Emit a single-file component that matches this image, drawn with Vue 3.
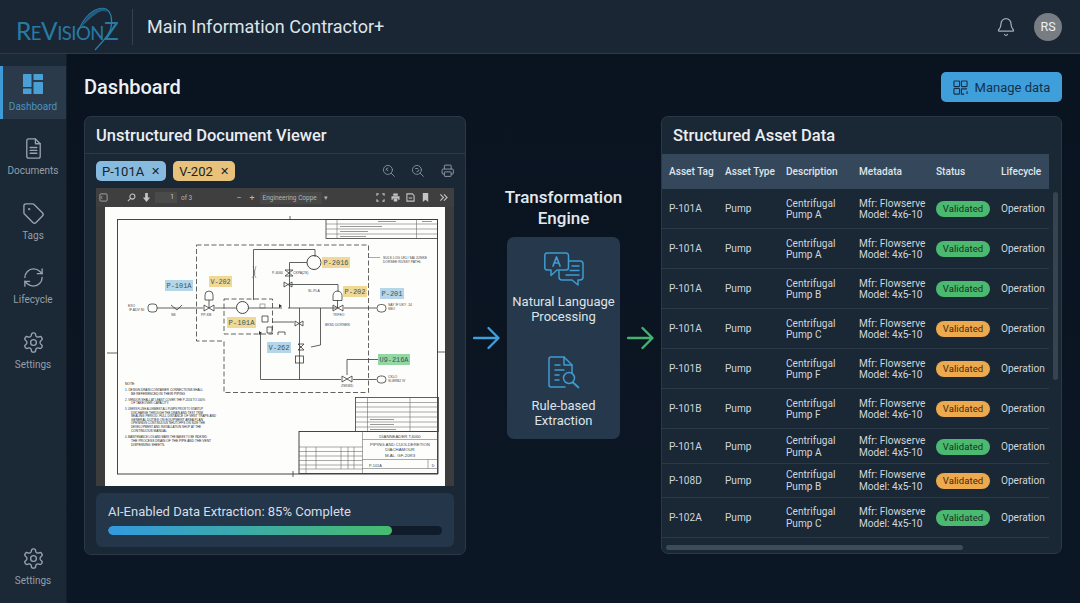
<script setup>
const gear = [
  'M12.22 2h-.44a2 2 0 0 0-2 2v.18a2 2 0 0 1-1 1.73l-.43.25a2 2 0 0 1-2 0l-.15-.08a2 2 0 0 0-2.73.73l-.22.38a2 2 0 0 0 .73 2.73l.15.1a2 2 0 0 1 1 1.72v.51a2 2 0 0 1-1 1.74l-.15.09a2 2 0 0 0-.73 2.73l.22.38a2 2 0 0 0 2.73.73l.15-.08a2 2 0 0 1 2 0l.43.25a2 2 0 0 1 1 1.73V20a2 2 0 0 0 2 2h.44a2 2 0 0 0 2-2v-.18a2 2 0 0 1 1-1.73l.43-.25a2 2 0 0 1 2 0l.15.08a2 2 0 0 0 2.73-.73l.22-.39a2 2 0 0 0-.73-2.73l-.15-.08a2 2 0 0 1-1-1.74v-.5a2 2 0 0 1 1-1.74l.15-.09a2 2 0 0 0 .73-2.73l-.22-.38a2 2 0 0 0-2.73-.73l-.15.08a2 2 0 0 1-2 0l-.43-.25a2 2 0 0 1-1-1.73V4a2 2 0 0 0-2-2z',
  'M12 9a3 3 0 1 0 0 6 3 3 0 0 0 0-6z'
]

const navItems = [
  {
    label: 'Documents',
    paths: [
      'M14 2H7a2 2 0 0 0-2 2v16a2 2 0 0 0 2 2h10a2 2 0 0 0 2-2V7z',
      'M14 2v5h5',
      'M8.5 11h7M8.5 14h7M8.5 17h7'
    ]
  },
  {
    label: 'Tags',
    paths: [
      'M12.586 2.586A2 2 0 0 0 11.172 2H4a2 2 0 0 0-2 2v7.172a2 2 0 0 0 .586 1.414l8.704 8.704a2.426 2.426 0 0 0 3.42 0l6.58-6.58a2.426 2.426 0 0 0 0-3.42z',
      'M7.5 7a.5.5 0 1 0 0 1 .5.5 0 0 0 0-1z'
    ]
  },
  {
    label: 'Lifecycle',
    paths: [
      'M3 12a9 9 0 0 1 9-9 9.75 9.75 0 0 1 6.74 2.74L21 8',
      'M21 3v5h-5',
      'M21 12a9 9 0 0 1-9 9 9.75 9.75 0 0 1-6.74-2.74L3 16',
      'M8 16H3v5'
    ]
  },
  { label: 'Settings', paths: gear }
]

const columns = ['Asset Tag', 'Asset Type', 'Description', 'Metadata', 'Status', 'Lifecycle']

const rows = [
  { tag: 'P-101A', desc: 'Pump A', model: '4x6-10', state: 'ok', height: 40 },
  { tag: 'P-101A', desc: 'Pump A', model: '4x6-10', state: 'ok', height: 40 },
  { tag: 'P-101A', desc: 'Pump B', model: '4x5-10', state: 'ok', height: 40 },
  { tag: 'P-101A', desc: 'Pump C', model: '4x5-10', state: 'warn', height: 40 },
  { tag: 'P-101B', desc: 'Pump F', model: '4x6-10', state: 'warn', height: 40 },
  { tag: 'P-101B', desc: 'Pump F', model: '4x6-10', state: 'warn', height: 40 },
  { tag: 'P-101A', desc: 'Pump A', model: '4x5-10', state: 'ok', height: 34.5 },
  { tag: 'P-108D', desc: 'Pump B', model: '4x5-10', state: 'warn', height: 34 },
  { tag: 'P-102A', desc: 'Pump C', model: '4x5-10', state: 'ok', height: 40 }
]

// labels on the scanned drawing, in page pixels
const drawingTags = [
  { text: 'P-101A', x: 165, y: 280, w: 28, tone: 'blue' },
  { text: 'V-202', x: 209, y: 276, w: 23, tone: 'yellow' },
  { text: 'P-2016', x: 322, y: 257, w: 28, tone: 'yellow' },
  { text: 'P-202', x: 343, y: 286, w: 24, tone: 'yellow' },
  { text: 'P-201', x: 380, y: 288, w: 24, tone: 'blue' },
  { text: 'P-101A', x: 227, y: 317, w: 29, tone: 'yellow' },
  { text: 'V-262', x: 267, y: 342, w: 24, tone: 'blue' },
  { text: 'U9-216A', x: 378, y: 354, w: 32, tone: 'green' }
]

const notes = [
  { t: 'NOTE:', x: 125, y: 385, w: 10 },
  { t: '1.  DESIGN DRAIN CONTAINER CONNECTIONS SHALL', x: 125, y: 391, w: 78 },
  { t: 'BE REFERENCED IN THEIR PIPING', x: 131, y: 394.5, w: 54 },
  { t: '2.  VENDOR SHALL AT LEAST COVER THE P-2016 TO 100%', x: 125, y: 400.5, w: 80 },
  { t: 'OF TAKEOVER CAPACITY.', x: 131, y: 404, w: 38 },
  { t: '3.  USERS FLUSH ALIGNMENT ALL PUMPS PRIOR TO STARTUP', x: 125, y: 410, w: 78 },
  { t: 'DISCHARGE THROUGH THE DRAIN AND TEST TRIM', x: 131, y: 413.5, w: 72 },
  { t: 'SEALING PERIOD. FULL DISTANCE OF VENT TRAPS AND', x: 131, y: 417, w: 85 },
  { t: 'GENERAL DUTIES ON EQUIPMENT AREA PLAN', x: 131, y: 420.5, w: 72 },
  { t: 'OPENINGS CONTINUOUS SHUTOFFS ON SIZE THE', x: 131, y: 424, w: 74 },
  { t: 'DEVELOPMENT AND INSTALLATION SHOP AT THE', x: 131, y: 428, w: 70 },
  { t: 'CONTINUOUS MANUAL', x: 131, y: 432, w: 36 },
  { t: '4.  MAINTENANCE LOG AND MARK THE BASES TO BE INDEXED', x: 125, y: 438, w: 82 },
  { t: 'THE PROCESS DRAIN OF THE PIPE AND THE VENT', x: 131, y: 441.5, w: 80 },
  { t: 'DISPENSING SHEETS.', x: 131, y: 445.5, w: 34 }
]
</script>

<template>
  <div class="app">
    <header class="topbar">
      <div class="logo">
        <span class="logo-text">R<small>E</small>V<small>ISION</small>Z</span>
        <svg class="logo-swoosh" viewBox="0 0 40 48" fill="none">
          <path d="M1 30C6 17 13 8 22 5c6-2 11 0 13 7 2 9-1 18-8 25l-8 9" stroke="#2b7fab" stroke-width="1.200" />
          <path d="M4 25C9 15 16 7 24 5c3-1 5 0 8 3-5-2-8-1-12 2-6 4-11 9-16 15z" fill="#1f5f85" />
        </svg>
      </div>
      <div class="topbar-divider"></div>
      <h1 class="app-title">Main Information Contractor+</h1>
      <svg class="bell" viewBox="0 0 24 24" fill="none" stroke="#a4adb7" stroke-width="1.5" stroke-linecap="round" stroke-linejoin="round">
        <path d="M10.268 21a2 2 0 0 0 3.464 0" />
        <path d="M3.262 15.326A1 1 0 0 0 4 17h16a1 1 0 0 0 .74-1.673C19.41 13.956 18 12.499 18 8A6 6 0 0 0 6 8c0 4.499-1.411 5.956-2.738 7.326" />
      </svg>
      <div class="avatar">RS</div>
    </header>

    <div class="body">
      <aside class="sidebar">
        <a class="nav-item active">
          <svg class="nav-icon" viewBox="0 0 20 20" fill="#4a9fd4">
            <rect x="0" y="0" width="8.5" height="13" rx="0.6" />
            <rect x="0" y="14.5" width="8.5" height="5.5" rx="0.6" />
            <rect x="10.5" y="0" width="9.5" height="6" rx="0.6" />
            <rect x="10.5" y="8" width="9.5" height="12" rx="0.6" />
          </svg>
          <span>Dashboard</span>
        </a>
        <a v-for="item in navItems" :key="item.label" class="nav-item">
          <svg class="nav-icon line" viewBox="0 0 24 24" fill="none" stroke="#98a3ae" stroke-width="1.4" stroke-linecap="round" stroke-linejoin="round">
            <path v-for="d in item.paths" :key="d" :d="d" />
          </svg>
          <span>{{ item.label }}</span>
        </a>
        <a class="nav-item bottom">
          <svg class="nav-icon line" viewBox="0 0 24 24" fill="none" stroke="#98a3ae" stroke-width="1.4" stroke-linecap="round" stroke-linejoin="round">
            <path v-for="d in gear" :key="d" :d="d" />
          </svg>
          <span>Settings</span>
        </a>
      </aside>

      <main class="main">
        <div class="page-head">
          <h2>Dashboard</h2>
          <button class="manage-btn">
            <svg viewBox="0 0 16 16" fill="none" stroke="#12324c" stroke-width="1.2">
              <rect x="1" y="1" width="6" height="6" rx="0.8" />
              <rect x="9" y="1" width="6" height="6" rx="0.8" />
              <rect x="1" y="9" width="6" height="6" rx="0.8" />
              <path d="M9 9.5h6M9 9v6h3M15 12v3" />
            </svg>
            Manage data
          </button>
        </div>

        <div class="columns">
          <section class="panel viewer-panel">
            <h3 class="panel-title">Unstructured Document Viewer</h3>
            <div class="chip-row">
              <span class="chip blue">P-101A <i>✕</i></span>
              <span class="chip yellow">V-202 <i>✕</i></span>
              <div class="viewer-tools">
                <svg viewBox="0 0 24 24" fill="none" stroke="#8d99a6" stroke-width="1.5" stroke-linecap="round">
                  <circle cx="10.5" cy="10.5" r="8" />
                  <path d="M16.5 16.5L22 22M7 10.5a3.5 3.5 0 0 1 3.5-3.5M8 10l2.5 2" />
                </svg>
                <svg viewBox="0 0 24 24" fill="none" stroke="#8d99a6" stroke-width="1.5" stroke-linecap="round">
                  <circle cx="10.5" cy="10.5" r="8" />
                  <path d="M16.5 16.5L22 22M14 10.5a3.5 3.5 0 0 1-3.5 3.5M8 8h4" />
                </svg>
                <svg viewBox="0 0 24 24" fill="none" stroke="#98a3ae" stroke-width="1.6" stroke-linejoin="round">
                  <path d="M6 18H4a2 2 0 0 1-2-2v-5a2 2 0 0 1 2-2h16a2 2 0 0 1 2 2v5a2 2 0 0 1-2 2h-2" />
                  <path d="M6 9V3a1 1 0 0 1 1-1h10a1 1 0 0 1 1 1v6" />
                  <rect x="6" y="14" width="12" height="8" rx="1" />
                </svg>
              </div>
            </div>

            <div class="pdf">
              <div class="pdf-toolbar">
                <svg class="tb side" viewBox="0 0 10 10" fill="none" stroke="#b5b5b5" stroke-width="0.9"><rect x="1" y="1" width="8" height="8" rx="1" /><path d="M3.5 3.5L2.5 5l1 1.5" /></svg>
                <svg class="tb find" viewBox="0 0 10 10" fill="none" stroke="#c4c4c4" stroke-width="1.2"><circle cx="6" cy="4" r="2.8" /><path d="M4 6L1 9" /></svg>
                <svg class="tb down" viewBox="0 0 10 10" fill="#c4c4c4"><path d="M3.5 0h3v5H9L5 10 1 5h2.5z" /></svg>
                <span class="page-input">1</span>
                <span class="tb-text of">of 3</span>
                <span class="tb-text minus">−</span>
                <span class="tb-text plus">+</span>
                <span class="zoom-select">Engineering Coppe <b>▾</b></span>
                <svg class="tb first" viewBox="0 0 10 10" fill="none" stroke="#c4c4c4" stroke-width="1.2"><path d="M1 3V1h2M7 1h2v2M9 7v2H7M3 9H1V7" /></svg>
                <svg class="tb" viewBox="0 0 10 10" fill="#c4c4c4"><path d="M2.500 .5h5V3h-5zM.5 3.500h9V7.500H8V6H2V7.500H.5zM3 6.500h4v3H3z" /></svg>
                <svg class="tb" viewBox="0 0 10 10" fill="none" stroke="#c4c4c4" stroke-width="1.2"><path d="M1 1h6l2 2v6H1zM3 5.500h4" /></svg>
                <svg class="tb" viewBox="0 0 10 10" fill="#c4c4c4"><path d="M2 0h6v10L5 7.500 2 10z" /></svg>
                <svg class="tb more" viewBox="0 0 10 10" fill="none" stroke="#c4c4c4" stroke-width="1.2"><path d="M1.500 1.500L5 5 1.500 8.500M5.500 1.500L9 5 5.500 8.500" /></svg>
              </div>
              <div class="pdf-page">
                <svg class="drawing" viewBox="105 207 340 279" width="340" height="279">
                  <rect x="117.5" y="219.5" width="320" height="254.5" class="ln heavy" />
                  <path d="M290 216v4M293 471v6M107 353h10M438 352h7" class="ln" />

                  <!-- revision table -->
                  <rect x="326" y="219.5" width="111.5" height="19" class="ln" />
                  <path d="M326 224h111M326 229h111M326 234h111M337 219.5v19M416.5 219.5v19" class="ln thin" />
                  <path d="M340 226.500h42M340 231.500h28M340 236.500h26M378 221.500h18M422 221.500h10" class="ln ghost" />

                  <!-- process boundaries -->
                  <path d="M196.500 245H368.500V392.500H224V341H196.500z" class="ln dash" />
                  <path d="M224 299H272.500V334H224z" class="ln dash" />

                  <!-- main lines -->
                  <path d="M157 308H203M215 308H236M248 308H282M288 308H337M344 308H376.500" class="ln" />
                  <path d="M253.500 300V249.500H315V257" class="ln" />
                  <path d="M289.500 308V262.500H307M289.500 284.500H338V292" class="ln" />
                  <path d="M299.500 308V379.500M260.500 334V379.500H341M353 379.500H376.500M320.500 308V345L311 347" class="ln" />
                  <path d="M347 375V359.500H378M272 322H294" class="ln" />
                  <path d="M253 266L255 274L252 278M256 266L254 274L256 278" class="ln thin" />
                  <path d="M282 306l-3-2v4zM262 333l-3-2v4z" class="solid" />

                  <!-- equipment -->
                  <rect x="148" y="304" width="9" height="8" rx="3" class="ln" />
                  <rect x="377" y="304.500" width="9" height="7.500" rx="3.500" class="ln" />
                  <rect x="377" y="376" width="9" height="7" rx="3.500" class="ln" />
                  <circle cx="242.500" cy="307.500" r="6" class="ln heavy" />
                  <circle cx="314" cy="262.500" r="7" class="ln heavy" />
                  <path d="M209 291a4 4 0 0 1 4 4v5h-8v-5a4 4 0 0 1 4-4zM209 300v8" class="ln" />
                  <path d="M337.500 291a4.500 4.500 0 0 1 4.500 4.500v5h-9v-5a4.500 4.500 0 0 1 4.500-4.500zM337.500 300v8" class="ln" />
                  <path d="M204 305v6l10-6v6zM333 305v6l10-6v6zM342 376v6l10-6v6zM285 270h8l-8 6h8zM284 282l-0 5 8-5v5zM295 321v5l8-5v5zM298 344h6l-6 6h6zM171 305l6 5 5-5" class="ln" />
                  <rect x="295.500" y="356" width="8" height="7" class="ln" />
                  <rect x="260" y="304" width="5" height="4" class="ln thin" />
                  <path d="M262 316h6v6h-6zM267 327h5v6h-5zM278 335v-3h7v3" class="ln" />

                  <!-- tiny callouts -->
                  <text x="128" y="307" class="tiny">EXO</text>
                  <text x="129" y="311" class="tiny">IF ADV NI</text>
                  <text x="388" y="306" class="tiny">SAY IF UKY .14</text>
                  <text x="388" y="310" class="tiny">SBO</text>
                  <text x="388" y="378" class="tiny">CKLO</text>
                  <text x="388" y="382" class="tiny">SI-BRB2 IV</text>
                  <text x="383" y="259" class="tiny">SULS LOG UKLI SAI JUNKE</text>
                  <text x="383" y="263" class="tiny">DORSEE RUSSY PATHL</text>
                  <text x="272" y="274" class="tiny">P-4060</text>
                  <text x="293" y="274" class="tiny">CKPA(2S)</text>
                  <text x="308" y="292" class="tiny">SL-PLA</text>
                  <text x="325" y="326" class="tiny">BKSD DORSEN</text>
                  <text x="201" y="316" class="tiny">PP-KB</text>
                  <text x="333" y="316" class="tiny">TKFEO</text>
                  <text x="341" y="387" class="tiny">ZSKWD</text>
                  <text x="171" y="316" class="tiny">SB</text>
                  <path d="M368.500 257.500H380" class="ln thin" />

                  <!-- notes -->
                  <text v-for="n in notes" :key="n.t" :x="n.x" :y="n.y" :textLength="n.w" lengthAdjust="spacingAndGlyphs" class="note">{{ n.t }}</text>

                  <!-- parts list -->
                  <rect x="355.500" y="397.500" width="83" height="34" class="ln" />
                  <path d="M355.500 402.500h83M355.500 407h83M355.500 412h83M355.500 417h83M355.500 422h83M355.500 427h83M367.500 397.500v34M410 397.500v34" class="ln thin" />
                  <path d="M370 419.500h24M370 424.500h24M370 429.500h26" class="ln ghost" />

                  <!-- title block -->
                  <rect x="299" y="431.500" width="139" height="42" class="ln heavy" fill="#fff" />
                  <path d="M362.500 431.500V473.500M299 447H362.500M299 451.500H362.500M299 456H362.500M299 460.500H362.500M299 465H362.500M299 469H362.500" class="ln thin" />
                  <path d="M306 447V473.500M316 447V469M341 447V469M348 447V469M354 447V469" class="ln thin" />
                  <path d="M362.500 439.500H438M362.500 459.500H438M362.500 468.500H438M428 459.500V468.500" class="ln thin" />
                  <text x="400" y="437.500" class="block-text">DIANNEADER T4060</text>
                  <text x="400" y="445.500" class="block-text">PIPING AND CUOLDERETION</text>
                  <text x="400" y="451" class="block-text">DIACHAMOUR</text>
                  <text x="400" y="456.500" class="block-text">M.AL. GF-20R3</text>
                  <text x="369" y="466.500" class="block-small">P-101A</text>
                  <text x="433" y="466.500" class="block-small" text-anchor="middle">D</text>

                  <g v-for="tag in drawingTags" :key="tag.text + tag.x">
                    <rect :x="tag.x" :y="tag.y" :width="tag.w" height="11" :class="['tag-box', tag.tone]" />
                    <text :x="tag.x + tag.w / 2" :y="tag.y + 8.200" :textLength="tag.w - 3" lengthAdjust="spacingAndGlyphs" text-anchor="middle" class="tag-text">{{ tag.text }}</text>
                  </g>
                </svg>
              </div>
            </div>

            <div class="progress-card">
              <p>AI-Enabled Data Extraction: 85% Complete</p>
              <div class="track">
                <div class="fill"></div>
              </div>
            </div>
          </section>

          <section class="engine">
            <h3>Transformation<br />Engine</h3>
            <div class="engine-row">
              <svg class="flow-arrow" viewBox="0 0 27 24" fill="none" stroke="#3f9fda" stroke-width="2.300" stroke-linecap="round" stroke-linejoin="round">
                <path d="M1 12H25M15.500 2L25.500 12L15.500 22" />
              </svg>
              <div class="engine-card">
                <div class="engine-step">
                  <svg viewBox="0 0 40 36" fill="none" stroke="#3f9bd2" stroke-width="1.500" stroke-linejoin="round" stroke-linecap="round">
                    <path d="M3 1h19a2.500 2.500 0 0 1 2.500 2.500v12A2.500 2.500 0 0 1 22 18H13L7 23.500V18H3A2.500 2.500 0 0 1 .8 15.500v-12A2.500 2.500 0 0 1 3 1z" />
                    <path d="M25 9h11a3 3 0 0 1 3 3v13a3 3 0 0 1-3 3h-2v5l-6-5H18a3 3 0 0 1-3-3v-6" />
                    <path d="M28 14h7M26 18.500h9M22 23h13" />
                    <path d="M9 14l3.500-9 3.500 9M10.300 11h4.400" stroke-width="1.700" />
                  </svg>
                  <span>Natural Language<br />Processing</span>
                </div>
                <div class="engine-step">
                  <svg class="rule-icon" viewBox="0 0 32 34" fill="none" stroke="#3f9bd2" stroke-width="1.500" stroke-linejoin="round" stroke-linecap="round">
                    <path d="M24 17V9l-8-8H3a2 2 0 0 0-2 2v26a2 2 0 0 0 2 2h14" />
                    <path d="M16 1v8h8" />
                    <path d="M7 9h5M7 14h9M7 19h4M7 24h4" />
                    <circle cx="21" cy="22" r="5.500" />
                    <path d="M25 26.500l5.500 5" stroke-width="1.800" />
                  </svg>
                  <span>Rule-based<br />Extraction</span>
                </div>
              </div>
              <svg class="flow-arrow" viewBox="0 0 27 24" fill="none" stroke="#45b36f" stroke-width="2.300" stroke-linecap="round" stroke-linejoin="round">
                <path d="M1 12H25M15.500 2L25.500 12L15.500 22" />
              </svg>
            </div>
          </section>

          <section class="panel table-panel">
            <h3 class="panel-title">Structured Asset Data</h3>
            <div class="table-wrap">
              <div class="grid-row head">
                <span v-for="c in columns" :key="c">{{ c }}</span>
              </div>
              <div v-for="(row, i) in rows" :key="i" class="grid-row" :style="{ height: row.height + 'px' }">
                <span>{{ row.tag }}</span>
                <span>Pump</span>
                <span>Centrifugal<br />{{ row.desc }}</span>
                <span>Mfr: Flowserve<br />Model: {{ row.model }}</span>
                <span><em :class="['badge', row.state]">Validated</em></span>
                <span>Operation</span>
              </div>
              <div class="scroll-v"></div>
              <div class="scroll-h"></div>
            </div>
          </section>
        </div>
      </main>
    </div>
  </div>
</template>

<style>
html, body {
  margin: 0;
  background: #0b1420;
}
</style>

<style scoped>
.app {
  width: 1080px;
  height: 603px;
  overflow: hidden;
  display: flex;
  flex-direction: column;
  font-family: Roboto, "Liberation Sans", sans-serif;
  color: #e6ebf0;
  background: #0b1420;
}

.topbar {
  height: 53px;
  flex: none;
  display: flex;
  align-items: center;
  padding: 0 18px 0 16px;
  background: #1a2634;
  border-bottom: 1px solid #2c3a49;
}
.logo {
  position: relative;
  width: 102px;
  height: 53px;
}
.logo-text {
  position: absolute;
  left: 0;
  top: 17px;
  font-family: Lato, sans-serif;
  font-weight: 400;
  font-size: 24.500px;
  line-height: 28px;
  letter-spacing: -0.5px;
  color: #287aa5;
  white-space: nowrap;
}
.logo-text small {
  font-size: 18.500px;
}
.logo-swoosh {
  position: absolute;
  left: 60px;
  top: 4px;
  width: 40px;
  height: 48px;
}
.topbar-divider {
  width: 1px;
  height: 36px;
  margin: 0 14px;
  background: #34424f;
}
.app-title {
  flex: 1;
  margin: 0;
  font-size: 18px;
  font-weight: 400;
  color: #dfe4e8;
}
.bell {
  width: 20px;
  height: 20px;
  margin-right: 18px;
}
.avatar {
  width: 28px;
  height: 28px;
  border-radius: 50%;
  background: #777d83;
  color: #eef0f2;
  font-size: 12.500px;
  display: flex;
  align-items: center;
  justify-content: center;
}

.body {
  flex: 1;
  display: flex;
  min-height: 0;
}
.sidebar {
  width: 66px;
  flex: none;
  display: flex;
  flex-direction: column;
  gap: 11.500px;
  padding: 12px 0 9px;
  background: #1b2836;
  border-right: 1px solid #141e2a;
}
.nav-item {
  height: 53px;
  flex: none;
  display: flex;
  flex-direction: column;
  align-items: center;
  justify-content: flex-end;
  gap: 5px;
  padding-bottom: 7.500px;
  box-sizing: border-box;
  font-size: 10px;
  color: #949faa;
}
.nav-item.active {
  background: #2a3a4b;
  border-left: 3px solid #3f9bd8;
  padding-right: 3px;
  color: #4a93bf;
  gap: 7px;
}
.nav-item.bottom {
  margin-top: auto;
  transform: translateY(-1px);
}
.nav-icon {
  width: 20px;
  height: 20px;
}
.nav-icon.line {
  width: 23px;
  height: 23px;
}

.main {
  flex: 1;
  min-width: 0;
  padding: 18px 18px 0 17px;
  background: linear-gradient(180deg, #0a1320 0%, #0c1725 100%);
}
.page-head {
  display: flex;
  align-items: flex-start;
  justify-content: space-between;
  height: 31px;
  margin-bottom: 13px;
}
.page-head h2 {
  margin: 0;
  font-size: 20px;
  line-height: 30px;
  font-weight: 500;
  color: #eef1f4;
}
.manage-btn {
  width: 121px;
  height: 30px;
  display: flex;
  align-items: center;
  justify-content: center;
  gap: 7px;
  border: 0;
  border-radius: 5px;
  background: #3f9fdb;
  color: #12324c;
  font-family: inherit;
  font-size: 13px;
  padding: 0;
}
.manage-btn svg {
  width: 15px;
  height: 15px;
}

.columns {
  display: flex;
  align-items: flex-start;
}
.panel {
  background: #1a2735;
  border: 1px solid #2a3847;
  border-radius: 7px;
  box-sizing: border-box;
  overflow: hidden;
}
.panel-title {
  margin: 0;
  font-size: 16.500px;
  font-weight: 500;
  height: 37px;
  line-height: 37px;
  color: #eaeef2;
  border-bottom: 1px solid #2b3948;
  box-sizing: border-box;
}

.viewer-panel {
  width: 382px;
  height: 439px;
  padding: 0 11px;
  flex: none;
}
.viewer-panel .panel-title {
  margin: 0 -11px;
  padding-left: 11px;
}
.chip-row {
  display: flex;
  align-items: center;
  gap: 7px;
  height: 20px;
  margin: 7px 0;
}
.chip {
  height: 20px;
  padding: 0 6px;
  border-radius: 5px;
  display: flex;
  align-items: center;
  gap: 7px;
  font-size: 13px;
  color: #17222e;
}
.chip i {
  font-style: normal;
  font-size: 10.500px;
}
.chip.blue { background: #86bbdf; }
.chip.yellow { background: #e8c27a; }
.viewer-tools {
  margin-left: auto;
  display: flex;
  gap: 16px;
}
.viewer-tools svg {
  width: 13.500px;
  height: 13.500px;
}

.pdf {
  height: 298px;
  background: #3c3c3c;
  display: flex;
  flex-direction: column;
}
.pdf-toolbar {
  height: 19px;
  flex: none;
  display: flex;
  align-items: center;
  padding-left: 3px;
  background: #3f3f40;
}
.tb {
  width: 9px;
  height: 9px;
  flex: none;
  margin-right: 6px;
}
.tb.side { margin-right: 19px; }
.tb.find { margin-right: 6px; }
.tb.down { margin-right: 4px; }
.tb.first { margin-left: 54px; }
.tb.more { margin-left: 3px; }
.page-input {
  width: 22px;
  height: 11px;
  background: #4a4a4a;
  font-size: 6.500px;
  line-height: 11px;
  text-align: right;
  padding-right: 3px;
  box-sizing: border-box;
  color: #cfcfcf;
}
.tb-text {
  font-size: 6.500px;
  color: #b4b4b4;
}
.tb-text.of { margin: 0 44px 0 4px; }
.tb-text.minus { font-size: 9px; margin-right: 8px; }
.tb-text.plus { font-size: 9px; margin-right: 5px; }
.zoom-select {
  width: 62px;
  height: 12px;
  background: #474747;
  font-size: 6.500px;
  line-height: 12px;
  padding-left: 3px;
  box-sizing: border-box;
  color: #b4b4b4;
  white-space: nowrap;
}
.zoom-select b {
  font-weight: 400;
  margin-left: 6px;
}
.pdf-page {
  width: 340px;
  height: 279px;
  margin-left: 9px;
  background: #fdfdfc;
}
.drawing {
  display: block;
}
.ln {
  fill: none;
  stroke: #3a3a3a;
  stroke-width: 0.800;
}
.ln.heavy {
  stroke: #444;
  stroke-width: 1;
}
.ln.thin {
  stroke: #555;
  stroke-width: 0.500;
}
.ln.ghost {
  stroke: #999;
  stroke-width: 1;
}
.ln.dash {
  stroke-dasharray: 5 2.500;
}
.solid {
  fill: #333;
}
.tiny {
  font-size: 3.400px;
  fill: #444;
  font-family: "Liberation Sans", sans-serif;
}
.note {
  font-size: 3.200px;
  fill: #222;
  font-family: "Liberation Sans", sans-serif;
}
.block-text {
  font-size: 4.300px;
  fill: #444;
  text-anchor: middle;
  font-family: "Liberation Sans", sans-serif;
}
.block-small {
  font-size: 3.800px;
  fill: #444;
  font-family: "Liberation Sans", sans-serif;
}
.tag-box { stroke: none; }
.tag-box.blue { fill: #b5d5e8; }
.tag-box.yellow { fill: #f1d995; }
.tag-box.green { fill: #93d7a2; }
.tag-text {
  font-size: 8px;
  fill: #3b5566;
  font-family: "Liberation Mono", monospace;
}

.progress-card {
  height: 54px;
  margin-top: 7px;
  padding: 11px 12px 0;
  box-sizing: border-box;
  border-radius: 6px;
  background: #24364a;
}
.progress-card p {
  margin: 0 0 6px;
  font-size: 13px;
  line-height: 16px;
  color: #d6dde4;
}
.track {
  height: 9px;
  border-radius: 5px;
  background: #101c2a;
  overflow: hidden;
}
.fill {
  width: 85%;
  height: 100%;
  border-radius: 5px;
  background: linear-gradient(90deg, #339ade 0%, #46bc6e 100%);
}

.engine {
  width: 195px;
  flex: none;
  text-align: center;
  padding-top: 71px;
  box-sizing: border-box;
}
.engine h3 {
  margin: 0 0 9px;
  font-size: 17px;
  line-height: 20.500px;
  font-weight: 500;
  color: #e3e8ec;
}
.engine-row {
  display: flex;
  align-items: center;
  justify-content: center;
  gap: 7px;
}
.flow-arrow {
  width: 27px;
  height: 24px;
  flex: none;
}
.engine-card {
  width: 113px;
  height: 202px;
  flex: none;
  border-radius: 7px;
  background: #26384b;
  padding-top: 15px;
  box-sizing: border-box;
}
.engine-step {
  height: 104px;
  font-size: 13px;
  line-height: 15px;
  color: #dde3e9;
}
.engine-step svg {
  display: block;
  width: 40px;
  height: 36px;
  margin: 0 auto 6px;
}
.engine-step .rule-icon {
  width: 32px;
  height: 34px;
  margin-bottom: 8px;
}

.table-panel {
  width: 401px;
  height: 438px;
  flex: none;
}
.table-panel .panel-title {
  padding-left: 11px;
  border-bottom: 0;
}
.table-wrap {
  position: relative;
  height: 400px;
}
.grid-row {
  width: 387px;
  display: grid;
  grid-template-columns: 56px 61px 73px 77px 65px 1fr;
  align-items: center;
  padding: 1.500px 0 0 7px;
  box-sizing: border-box;
  font-size: 10.100px;
  line-height: 11.700px;
  color: #cfd6dd;
  border-bottom: 1px solid #2a3847;
}
.grid-row.head {
  height: 35px;
  padding-top: 0;
  background: #35475a;
  font-weight: 500;
  color: #dfe5ea;
  border-bottom: 0;
}
.badge {
  display: block;
  width: 54px;
  height: 16px;
  border-radius: 8px;
  font-style: normal;
  font-size: 9.500px;
  letter-spacing: 0.1px;
  line-height: 16px;
  text-align: center;
  color: #16301f;
}
.badge.ok { background: #4bb96f; }
.badge.warn { background: #eda94d; color: #3a2a10; }
.scroll-v {
  position: absolute;
  left: 391px;
  top: 38px;
  width: 5px;
  height: 188px;
  border-radius: 3px;
  background: #35444f;
}
.scroll-h {
  position: absolute;
  left: 4px;
  top: 391px;
  width: 297px;
  height: 5px;
  border-radius: 3px;
  background: #3d4c5a;
}
</style>
